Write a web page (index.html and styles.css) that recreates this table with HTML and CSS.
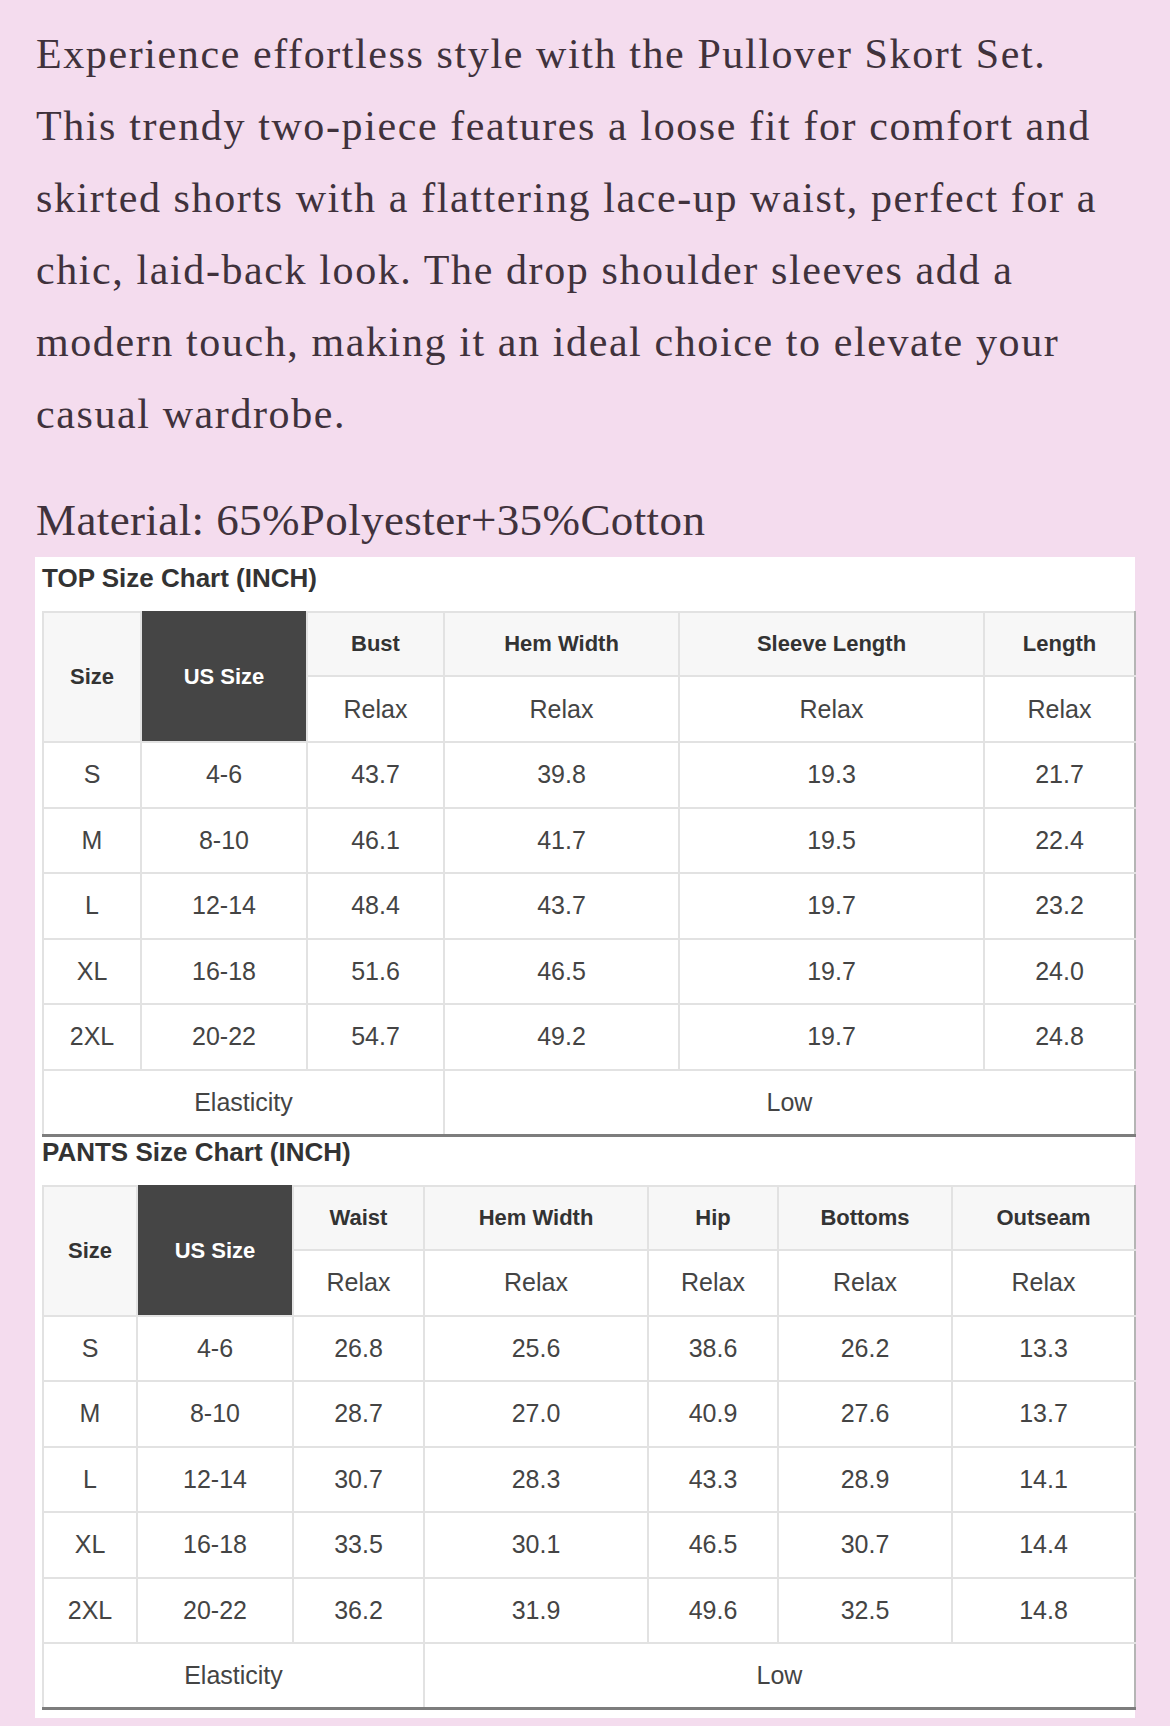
FILE: index.html
```html
<!DOCTYPE html>
<html lang="en">
<head>
<meta charset="utf-8">
<title>Pullover Skort Set</title>
<link rel="stylesheet" href="styles.css">
</head>
<body>
<div class="page">
  <p class="desc">Experience effortless style with the Pullover Skort Set.<br>This trendy two-piece features a loose fit for comfort and<br>skirted shorts with a flattering lace-up waist, perfect for a<br>chic, laid-back look. The drop shoulder sleeves add a<br>modern touch, making it an ideal choice to elevate your<br>casual wardrobe.</p>
  <p class="material">Material: 65%Polyester+35%Cotton</p>
  <div class="chart">
    <h3 class="chart-title">TOP Size Chart (INCH)</h3>
    <table class="size-table top">
      <colgroup><col><col><col><col><col><col></colgroup>
      <tr class="head">
        <th rowspan="2" class="size-h">Size</th>
        <th rowspan="2" class="us-h">US Size</th>
        <th>Bust</th>
        <th>Hem Width</th>
        <th>Sleeve Length</th>
        <th>Length</th>
      </tr>
      <tr class="sub">
        <td>Relax</td><td>Relax</td><td>Relax</td><td>Relax</td>
      </tr>
      <tr><td>S</td><td>4-6</td><td>43.7</td><td>39.8</td><td>19.3</td><td>21.7</td></tr>
      <tr><td>M</td><td>8-10</td><td>46.1</td><td>41.7</td><td>19.5</td><td>22.4</td></tr>
      <tr><td>L</td><td>12-14</td><td>48.4</td><td>43.7</td><td>19.7</td><td>23.2</td></tr>
      <tr><td>XL</td><td>16-18</td><td>51.6</td><td>46.5</td><td>19.7</td><td>24.0</td></tr>
      <tr><td>2XL</td><td>20-22</td><td>54.7</td><td>49.2</td><td>19.7</td><td>24.8</td></tr>
      <tr class="elastic"><td colspan="3">Elasticity</td><td colspan="3">Low</td></tr>
    </table>
    <h3 class="chart-title">PANTS Size Chart (INCH)</h3>
    <table class="size-table pants">
      <colgroup><col><col><col><col><col><col><col></colgroup>
      <tr class="head">
        <th rowspan="2" class="size-h">Size</th>
        <th rowspan="2" class="us-h">US Size</th>
        <th>Waist</th>
        <th>Hem Width</th>
        <th>Hip</th>
        <th>Bottoms</th>
        <th>Outseam</th>
      </tr>
      <tr class="sub">
        <td>Relax</td><td>Relax</td><td>Relax</td><td>Relax</td><td>Relax</td>
      </tr>
      <tr><td>S</td><td>4-6</td><td>26.8</td><td>25.6</td><td>38.6</td><td>26.2</td><td>13.3</td></tr>
      <tr><td>M</td><td>8-10</td><td>28.7</td><td>27.0</td><td>40.9</td><td>27.6</td><td>13.7</td></tr>
      <tr><td>L</td><td>12-14</td><td>30.7</td><td>28.3</td><td>43.3</td><td>28.9</td><td>14.1</td></tr>
      <tr><td>XL</td><td>16-18</td><td>33.5</td><td>30.1</td><td>46.5</td><td>30.7</td><td>14.4</td></tr>
      <tr><td>2XL</td><td>20-22</td><td>36.2</td><td>31.9</td><td>49.6</td><td>32.5</td><td>14.8</td></tr>
      <tr class="elastic"><td colspan="3">Elasticity</td><td colspan="4">Low</td></tr>
    </table>
  </div>
</div>
</body>
</html>
```
FILE: styles.css
```css
html, body {
  margin: 0;
  padding: 0;
  background: #f4dcee;
}
.page {
  padding: 18px 0 9px 35px;
}
.desc {
  margin: 0 0 34px 1px;
  font-family: "Liberation Serif", "DejaVu Serif", serif;
  font-size: 42px;
  line-height: 72px;
  letter-spacing: 1.6px;
  color: #40323c;
  white-space: nowrap;
}
.material {
  margin: 0 0 1px 1px;
  font-family: "Liberation Serif", "DejaVu Serif", serif;
  font-size: 45px;
  line-height: 72px;
  letter-spacing: 0.4px;
  color: #40323c;
}
.chart {
  width: 1100px;
  box-sizing: border-box;
  background: #fff;
  padding: 6px 1px 8px 7px;
  font-family: "Liberation Sans", Arial, sans-serif;
}
.chart-title {
  margin: 0 0 18px 0;
  font-size: 26px;
  line-height: 30px;
  font-weight: bold;
  color: #333;
}
.size-table {
  width: 1092px;
  table-layout: fixed;
  border-collapse: collapse;
  margin-bottom: 0;
}
.size-table td,
.size-table th {
  border: 2px solid #e2e2e2;
  padding: 0;
  text-align: center;
  vertical-align: middle;
  font-size: 25px;
  font-weight: normal;
  color: #444;
  height: 63.5px;
}
.size-table tr > :last-child {
  border-right: 2px solid #b5b5b5;
}
.size-table .head th {
  background: #f7f7f7;
  font-size: 22px;
  font-weight: bold;
  color: #333;
  height: 62px;
}
.size-table .head th.us-h {
  background: #454545;
  color: #fff;
  border-color: #454545 #e2e2e2 #e2e2e2 #e2e2e2;
}
.size-table .sub td {
  height: 64px;
}
.size-table .elastic td {
  border-bottom: 3px solid #7d7d7d;
  height: 63px;
}
.top col:nth-child(1) { width: 98px; }
.top col:nth-child(2) { width: 166px; }
.top col:nth-child(3) { width: 137px; }
.top col:nth-child(4) { width: 235px; }
.top col:nth-child(5) { width: 305px; }
.top col:nth-child(6) { width: 151px; }
.pants col:nth-child(1) { width: 94px; }
.pants col:nth-child(2) { width: 156px; }
.pants col:nth-child(3) { width: 131px; }
.pants col:nth-child(4) { width: 224px; }
.pants col:nth-child(5) { width: 130px; }
.pants col:nth-child(6) { width: 174px; }
.pants col:nth-child(7) { width: 183px; }
```
